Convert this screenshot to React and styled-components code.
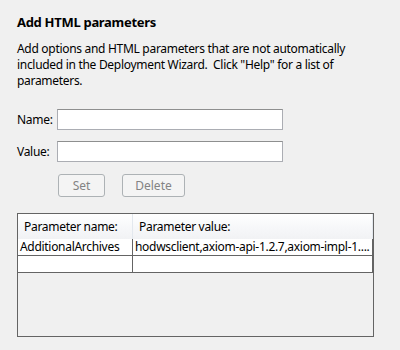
import React from 'react';
import styled, { createGlobalStyle } from 'styled-components';

const GlobalStyle = createGlobalStyle`
  body {
    margin: 0;
    background: #f0f0f0;
  }
`;

const Panel = styled.div`
  width: 400px;
  height: 350px;
  box-sizing: border-box;
  padding: 12px 17px 0;
  background: #f0f0f0;
  font-family: "Noto Sans", "Open Sans", sans-serif;
  font-size: 12px;
  letter-spacing: -0.3px;
  color: #000;
`;

const Title = styled.h2`
  margin: 0;
  font-size: 13px;
  font-weight: bold;
  line-height: 20px;
`;

const Description = styled.p`
  margin: 9px 0 0;
  line-height: 16px;
  white-space: nowrap;
`;

const Form = styled.div`
  display: grid;
  grid-template-columns: 40px 226px;
  row-gap: 11px;
  align-items: center;
  margin-top: 20px;
`;

const Label = styled.label`
  line-height: 16px;
`;

const TextField = styled.input`
  box-sizing: border-box;
  height: 21px;
  width: 226px;
  margin: 0;
  border: 1px solid #abadb3;
  border-top-color: #8e8f8f;
  background: #fff;
  font: inherit;
  padding: 0 3px;
`;

const Buttons = styled.div`
  display: flex;
  gap: 17px;
  margin: 12px 0 0 41px;
`;

const Button = styled.button`
  box-sizing: border-box;
  height: 23px;
  width: ${props => props.$w}px;
  margin: 0;
  padding: 0;
  border: 1px solid #adb2b5;
  border-radius: 3px;
  background: #f4f4f4;
  color: #838383;
  font: inherit;
`;

const Grid = styled.div`
  box-sizing: border-box;
  margin-top: 16px;
  width: 357px;
  height: 124px;
  border: 1px solid #646464;
  background: #f0f0f0;
`;

const Row = styled.div`
  display: grid;
  grid-template-columns: 115px 240px;
  height: ${props => (props.$head ? 25 : 16)}px;
  ${props => props.$head
    ? 'background: linear-gradient(#ffffff, #f7f8fa 50%, #f1f2f4);'
    : 'background: #fff; border-bottom: 1px solid #646464;'}
`;

const Cell = styled.div`
  box-sizing: border-box;
  overflow: hidden;
  white-space: nowrap;
  line-height: ${props => (props.$head ? 25 : 16)}px;
  padding-left: ${props => (props.$head ? 6 : 2)}px;
  border-right: 1px solid ${props => (props.$head ? '#e3e8ee' : '#646464')};
`;

const params = [
  { name: 'AdditionalArchives', value: 'hodwsclient,axiom-api-1.2.7,axiom-impl-1....' },
  { name: '', value: '' },
];

export default function App() {
  return (
    <>
      <GlobalStyle />
      <Panel>
        <Title>Add HTML parameters</Title>
        <Description>
          Add options and HTML parameters that are not automatically<br />
          included in the Deployment Wizard.&nbsp; Click "Help" for a list of<br />
          parameters.
        </Description>
        <Form>
          <Label htmlFor="pname">Name:</Label>
          <TextField id="pname" />
          <Label htmlFor="pvalue">Value:</Label>
          <TextField id="pvalue" />
        </Form>
        <Buttons>
          <Button $w={47} disabled>Set</Button>
          <Button $w={63} disabled>Delete</Button>
        </Buttons>
        <Grid>
          <Row $head>
            <Cell $head>Parameter name:</Cell>
            <Cell $head>Parameter value:</Cell>
          </Row>
          {params.map((p, i) => (
            <Row key={i}>
              <Cell>{p.name}</Cell>
              <Cell>{p.value}</Cell>
            </Row>
          ))}
        </Grid>
      </Panel>
    </>
  );
}
